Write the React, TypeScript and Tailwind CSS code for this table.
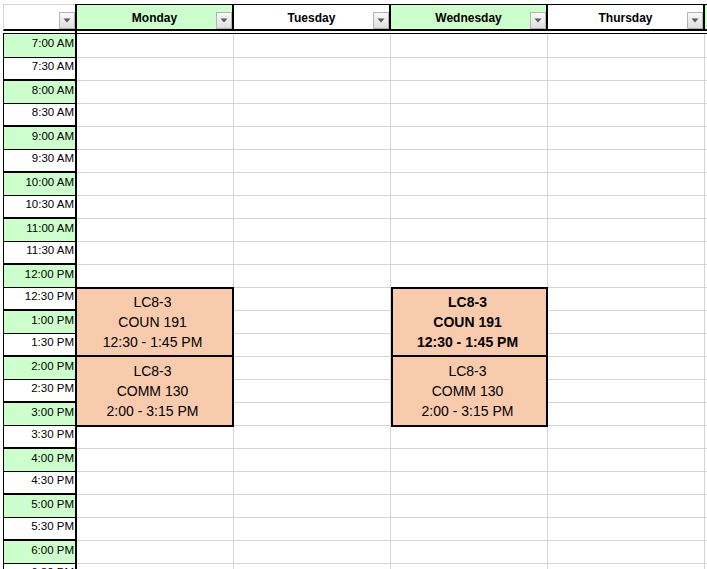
import React from 'react';

const times = [
  '7:00 AM', '7:30 AM', '8:00 AM', '8:30 AM', '9:00 AM', '9:30 AM', '10:00 AM', '10:30 AM',
  '11:00 AM', '11:30 AM', '12:00 PM', '12:30 PM', '1:00 PM', '1:30 PM', '2:00 PM', '2:30 PM',
  '3:00 PM', '3:30 PM', '4:00 PM', '4:30 PM', '5:00 PM', '5:30 PM', '6:00 PM', '6:30 PM',
];

type Block = { lines: string[]; bold?: boolean };

type Day = { name: string; green: boolean; blocks?: Block[] };

const days: Day[] = [
  {
    name: 'Monday',
    green: true,
    blocks: [
      { lines: ['LC8-3', 'COUN 191', '12:30 - 1:45 PM'] },
      { lines: ['LC8-3', 'COMM 130', '2:00 - 3:15 PM'] },
    ],
  },
  { name: 'Tuesday', green: false },
  {
    name: 'Wednesday',
    green: true,
    blocks: [
      { lines: ['LC8-3', 'COUN 191', '12:30 - 1:45 PM'], bold: true },
      { lines: ['LC8-3', 'COMM 130', '2:00 - 3:15 PM'] },
    ],
  },
  { name: 'Thursday', green: false },
  // next column, only a sliver of it shows at the right edge
  { name: '', green: true },
];

const FilterButton = () => (
  <div className="absolute right-0 bottom-0 w-[16px] h-[17px] border border-[#b4b4b4] bg-gradient-to-b from-[#fafafa] to-[#dedede] flex items-center justify-center">
    <svg width="8" height="5" viewBox="0 0 8 5">
      <path d="M0.5 0.5 L7.5 0.5 L4 4.5 Z" fill="#5a5a5a" />
    </svg>
  </div>
);

// header bottom: 2px line, 2px white gap, 1px line (double border)
const HeaderGap = () => (
  <>
    <div className="h-[2px] bg-white" />
    <div className="h-px bg-black" />
  </>
);

const rowHeight = (k: number) => (k === 0 ? 'h-[24px]' : 'h-[23px]');

const TimeColumn = () => (
  <div className="w-[74px] shrink-0 border-r-2 border-black">
    <div className="relative h-[27px] border-t border-l border-[#d4d4d4] border-b-2 border-b-black bg-white">
      <FilterButton />
    </div>
    <HeaderGap />
    {times.map((t, k) => {
      const hour = k % 2 === 0;
      return (
        <div
          key={t}
          className={`${rowHeight(k)} border-l border-black flex items-center justify-end pr-px pb-[3px] text-[11.5px] text-black ${
            hour ? 'bg-[#ccffcc] border-b' : 'bg-white border-b-2'
          } border-b-black`}
        >
          {t}
        </div>
      );
    })}
  </div>
);

const EventBlock = ({ block, h }: { block: Block; h: string }) => (
  <div
    className={`${h} flex flex-col items-center justify-center pr-[4px] text-[14px] leading-[20px] text-black ${
      block.bold ? 'font-bold' : ''
    }`}
  >
    {block.lines.map((l) => (
      <div key={l}>{l}</div>
    ))}
  </div>
);

const DayColumn = ({ day, first }: { day: Day; first: boolean }) => {
  const cell = 'border-b border-r border-[#d4d4d4] bg-white';
  const rows: React.ReactNode[] = [];

  if (day.blocks) {
    for (let k = 0; k < 10; k++) rows.push(<div key={k} className={`${rowHeight(k)} ${cell}`} />);
    rows.push(<div key="noon" className="h-[22px] border-r border-[#d4d4d4] bg-white" />);
    rows.push(
      <div
        key="event"
        className={`h-[140px] border-y-2 border-r-2 border-black bg-[#f8cbad] ${first ? '' : 'border-l-2'}`}
      >
        <EventBlock block={day.blocks[0]} h="h-[66px]" />
        <div className="h-[2px] bg-black" />
        <EventBlock block={day.blocks[1]} h="h-[68px]" />
      </div>
    );
    rows.push(<div key="after" className={`h-[22px] ${cell}`} />);
    for (let k = 18; k < times.length; k++) rows.push(<div key={k} className={`h-[23px] ${cell}`} />);
  } else {
    times.forEach((_, k) => rows.push(<div key={k} className={`${rowHeight(k)} ${cell}`} />));
  }

  return (
    <div className="w-[157px] shrink-0">
      <div
        className={`relative h-[27px] border-t border-r-2 border-b-2 border-black flex items-center justify-center pt-[2px] text-[12px] font-bold text-black ${
          day.green ? 'bg-[#ccffcc]' : 'bg-white'
        }`}
      >
        {day.name}
        <FilterButton />
      </div>
      <HeaderGap />
      {rows}
    </div>
  );
};

export default function App() {
  return (
    <div
      className="w-[707px] h-[569px] overflow-hidden bg-white pt-[4px] pl-[3px] flex items-start"
      style={{ fontFamily: '"Liberation Sans", Arial, sans-serif' }}
    >
      <TimeColumn />
      {days.map((d, i) => (
        <DayColumn key={i} day={d} first={i === 0} />
      ))}
    </div>
  );
}
